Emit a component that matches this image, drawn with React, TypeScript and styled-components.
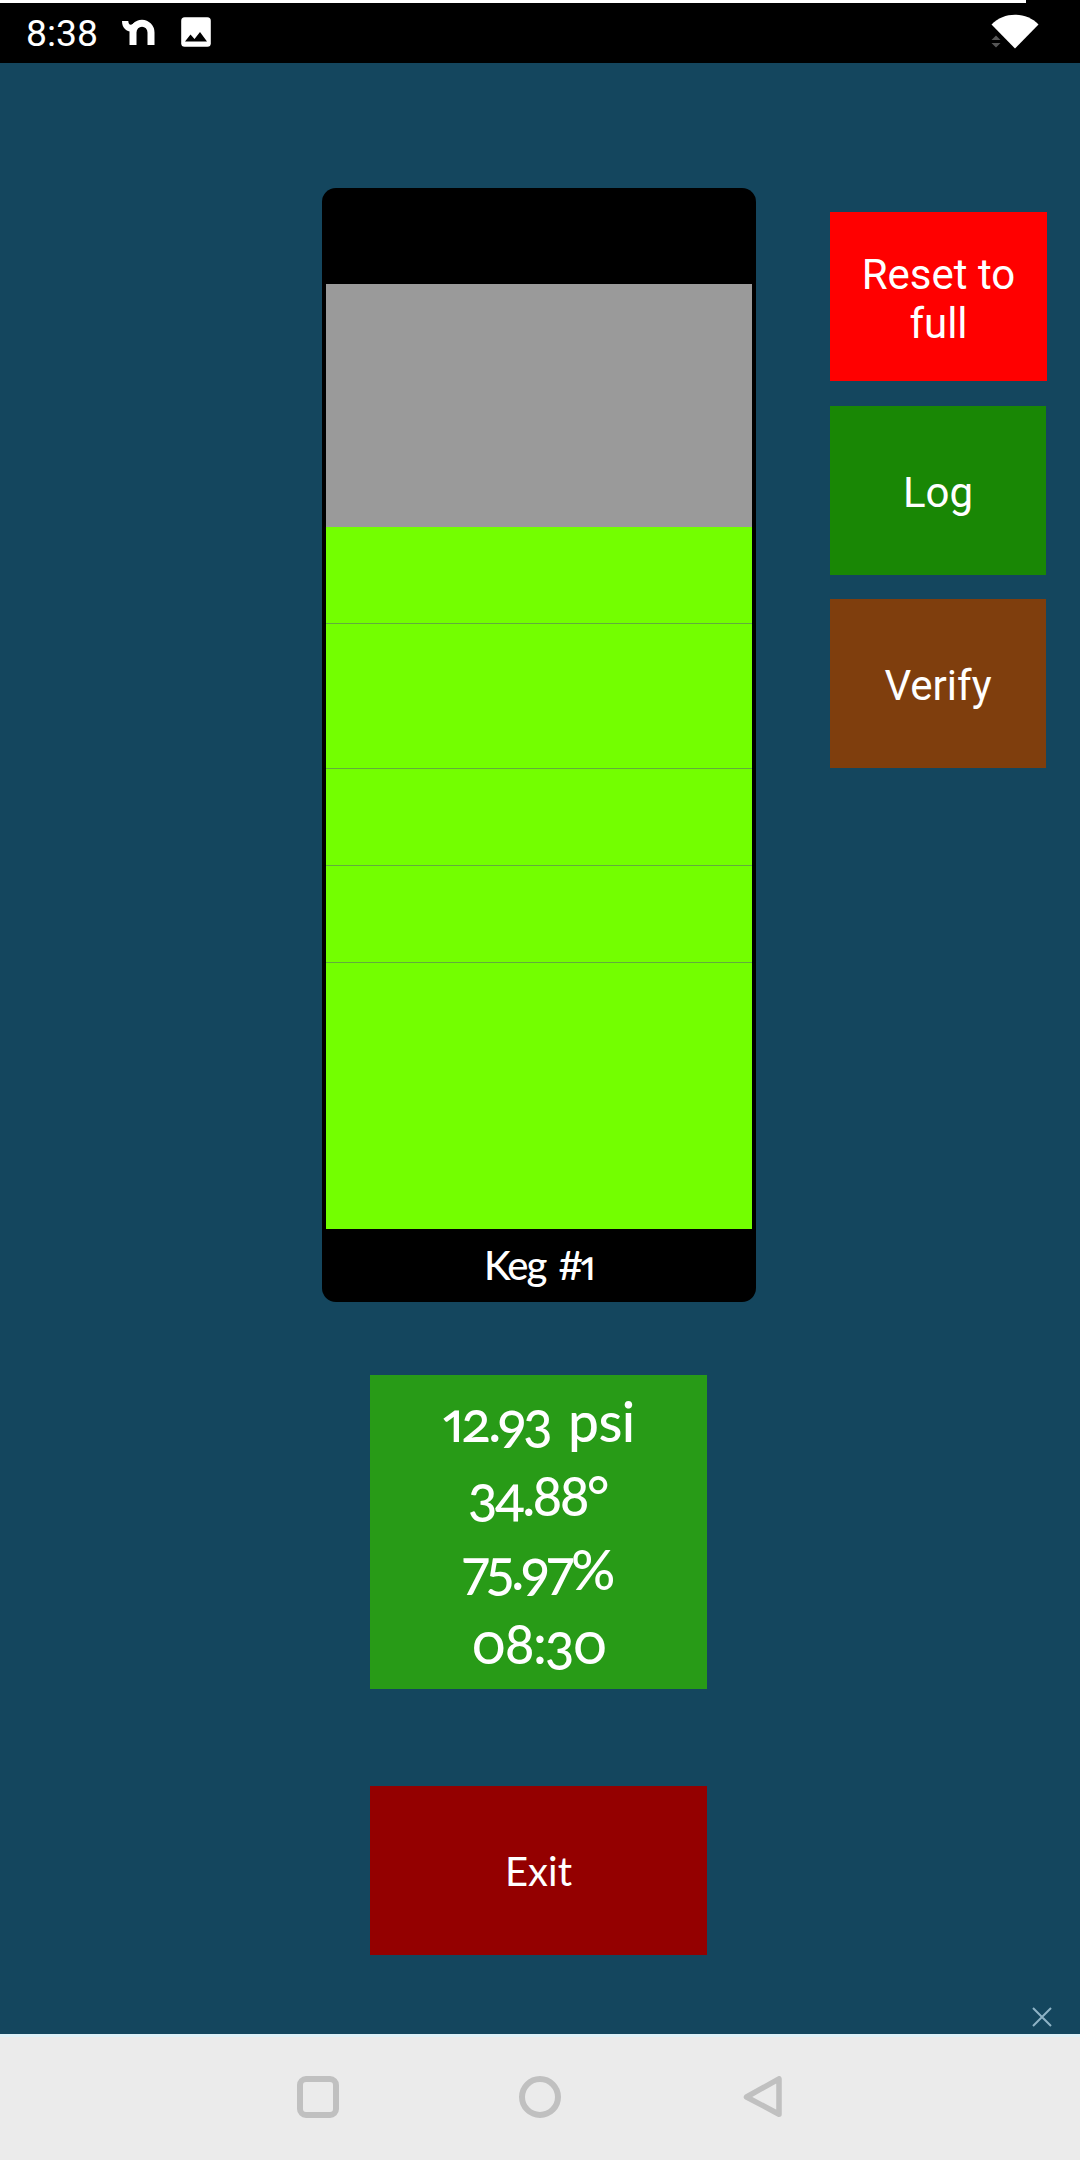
import React from "react";
import styled, { createGlobalStyle } from "styled-components";

const GlobalStyle = createGlobalStyle`
  *, *::before, *::after { box-sizing: border-box; }
  body { margin: 0; background: #14465e; }
  button { border: 0; margin: 0; padding: 0; color: #fff; }
`;

const Screen = styled.div`
  display: flex;
  flex-direction: column;
  width: 1080px;
  height: 2160px;
  overflow: hidden;
  background: #14465e;
  color: #fff;
`;

const ChargeLine = styled.div`
  width: 1026px;
  height: 3px;
  background: #fff;
`;

const StatusArea = styled.header`
  height: 63px;
  background: #000;
`;

const StatusBar = styled.div`
  display: flex;
  align-items: center;
  height: 58px;
  padding: 0 41px 0 26px;
`;

const Clock = styled.span`
  width: 96px;
  font: 400 37.3px/42px Roboto, sans-serif;
  padding-top: 1px;
`;

const StatusIcon = styled.svg<{ $gap?: number }>`
  display: block;
  flex: none;
  margin-left: ${(p) => p.$gap ?? 0}px;
`;

const Spacer = styled.div`
  flex: 1;
`;

const Main = styled.main`
  flex: 1;
  display: grid;
  grid-template-columns: 322px 434px 1fr;
  align-items: start;
`;

const CenterColumn = styled.section`
  grid-column: 2;
  display: flex;
  flex-direction: column;
  align-items: center;
  padding-top: 125px;
`;

const Keg = styled.div`
  display: flex;
  flex-direction: column;
  width: 434px;
  height: 1114px;
  padding: 96px 4px 0;
  border-radius: 14px;
  background: #000;
`;

const Gauge = styled.div`
  display: flex;
  flex-direction: column;
  height: 945px;
  padding-top: 243px;
  background: #9a9a9a;
`;

const Level = styled.div<{ $height: number; $ruled?: boolean }>`
  height: ${(p) => p.$height}px;
  background: #73ff00;
  border-bottom: ${(p) => (p.$ruled ? "1px solid #62ac3e" : "0")};
`;

const KegLabel = styled.div`
  height: 73px;
  text-align: center;
  font: 500 40px/73px Lato, sans-serif;
  font-variant-numeric: oldstyle-nums proportional-nums;
  letter-spacing: -1.9px;
  word-spacing: 4px;
`;

const Hash = styled.span`
  font-variant-numeric: lining-nums;
  letter-spacing: -3.5px;
`;

const Readout = styled.div`
  width: 337px;
  height: 314px;
  margin: 73px 1px 0 0;
  padding-top: 9px;
  background: #289b17;
`;

const Reading = styled.div<{ $tracking: number }>`
  text-align: center;
  white-space: nowrap;
  font: 500 55px/74px Lato, sans-serif;
  font-variant-numeric: oldstyle-nums proportional-nums;
  letter-spacing: ${(p) => p.$tracking}px;
`;

const Unit = styled.span`
  letter-spacing: -0.6px;
  word-spacing: 5px;
`;

const ExitButton = styled.button`
  width: 337px;
  height: 169px;
  margin: 97px 1px 0 0;
  background: #940000;
  font: 400 40px/48px Lato, sans-serif;
`;

const SideColumn = styled.aside`
  grid-column: 3;
  display: flex;
  flex-direction: column;
  align-items: flex-start;
  padding: 149px 0 0 74px;
`;

const ActionButton = styled.button<{ $color: string; $width?: number; $gap?: number }>`
  width: ${(p) => p.$width ?? 216}px;
  height: 169px;
  margin-top: ${(p) => p.$gap ?? 0}px;
  padding: 4px 20px 0;
  background: ${(p) => p.$color};
  font: 400 42px/49px Roboto, sans-serif;
`;

const DismissRow = styled.div`
  display: flex;
  justify-content: flex-end;
  padding: 0 28px 7px 0;
`;

const NavBar = styled.nav`
  display: flex;
  justify-content: space-between;
  height: 126px;
  padding: 39px 294px 0 294px;
  border-top: 3px solid #def0f7;
  background: #ebebeb;
`;

const levels = [97, 145, 97, 97];

const readings = [
  { value: "12.93", unit: " psi", tracking: -2.8 },
  { value: "34.88", unit: "°", tracking: -3 },
  { value: "75.97", unit: "%", tracking: -2.7 },
  { value: "08:30", tracking: -1.8 },
];

export default function App() {
  return (
    <Screen>
      <GlobalStyle />
      <StatusArea>
        <ChargeLine />
        <StatusBar>
          <Clock>8:38</Clock>
          <StatusIcon width="34" height="26" viewBox="0 0 34 26">
            <path d="M11 26 V13.5 A9 9.3 0 0 1 29 13.5 V26" fill="none" stroke="#fff" strokeWidth="7" />
            <path d="M0 2 H6.3 C6.6 7 9.5 7 13.5 2.5 L16 8 L11 13 C5 13 0 9.5 0 2 Z" fill="#fff" />
          </StatusIcon>
          <StatusIcon $gap={25} width="30" height="30" viewBox="0 0 30 30">
            <rect x="0.2" y="0.2" width="29.6" height="29.6" rx="3.5" fill="#fff" />
            <path d="M4 24.5 L9.5 17.5 L13.5 22 L19 15 L26 24.5 Z" fill="#000" />
          </StatusIcon>
          <Spacer />
          <StatusIcon width="48" height="36" viewBox="0 0 48 36">
            <path d="M0.5 10.5 C13 -2.5 35 -2.5 47.5 10.5 L24 34.5 Z" fill="#fff" />
            <path d="M0.5 26 L5 21.5 L9.5 26 Z M0.5 29 L5 33.5 L9.5 29 Z" fill="#555" />
          </StatusIcon>
        </StatusBar>
      </StatusArea>

      <Main>
        <CenterColumn>
          <Keg>
            <Gauge>
              {levels.map((height, i) => (
                <Level key={i} $height={height} $ruled />
              ))}
              <Level $height={266} />
            </Gauge>
            <KegLabel>
              Keg <Hash>#</Hash>1
            </KegLabel>
          </Keg>
          <Readout>
            {readings.map((r) => (
              <Reading key={r.value} $tracking={r.tracking}>
                {r.value}
                {r.unit && <Unit>{r.unit}</Unit>}
              </Reading>
            ))}
          </Readout>
          <ExitButton>Exit</ExitButton>
        </CenterColumn>
        <SideColumn>
          <ActionButton $color="#ff0000" $width={217}>Reset to full</ActionButton>
          <ActionButton $color="#198705" $gap={25}>Log</ActionButton>
          <ActionButton $color="#7f3e0d" $gap={24}>Verify</ActionButton>
        </SideColumn>
      </Main>

      <DismissRow>
        <svg width="20" height="20" viewBox="0 0 20 20">
          <path d="M1 1 L19 19 M19 1 L1 19" stroke="#8fb3c6" strokeWidth="2" />
        </svg>
      </DismissRow>
      <NavBar>
        <svg width="48" height="48" viewBox="0 0 48 48">
          <rect x="6" y="3" width="36" height="36" rx="6" fill="none" stroke="#c0c0c0" strokeWidth="6" />
        </svg>
        <svg width="48" height="48" viewBox="0 0 48 48">
          <circle cx="24" cy="21" r="18" fill="none" stroke="#c0c0c0" strokeWidth="6" />
        </svg>
        <svg width="48" height="48" viewBox="0 0 48 48">
          <path d="M8.5 21 L41 2.8 V38.2 Z" fill="none" stroke="#c0c0c0" strokeWidth="5.5" strokeLinejoin="round" />
        </svg>
      </NavBar>
    </Screen>
  );
}
